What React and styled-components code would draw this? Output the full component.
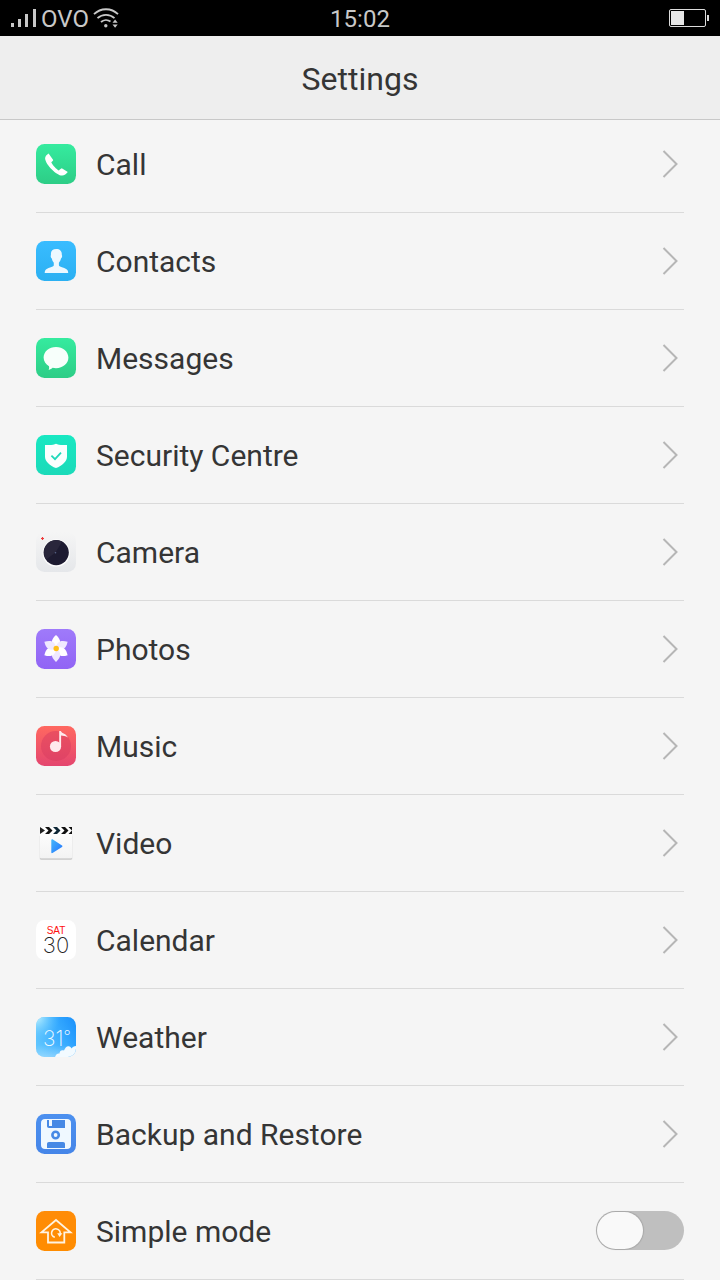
import React from 'react';
import styled, { createGlobalStyle } from 'styled-components';

const GlobalStyle = createGlobalStyle`
  * {
    box-sizing: border-box;
  }

  body {
    margin: 0;
    background: #f5f5f5;
    color: #353535;
    font-family: Roboto, "Noto Sans", sans-serif;
  }
`;

const StatusBar = styled.div`
  display: grid;
  grid-template-columns: 1fr auto 1fr;
  align-items: center;
  height: 36px;
  padding: 0 11px;
  background: #000;
  color: #c8c8c8;
`;

const StatusGroup = styled.div`
  display: flex;
  align-items: center;
  justify-content: ${props => (props.$end ? 'flex-end' : 'flex-start')};
  gap: 4px;
`;

const StatusText = styled.span`
  padding-top: 2px;
  font-size: 24px;
  line-height: 28px;
`;

const Header = styled.header`
  position: relative;
  z-index: 1;
  display: flex;
  align-items: center;
  justify-content: center;
  height: 84px;
  padding-top: 2px;
  background: #eee;
  border-bottom: 1px solid #c8c8c8;
`;

const Title = styled.h1`
  margin: 0;
  font-size: 32px;
  font-weight: 400;
  line-height: 40px;
`;

/* the first row is scrolled a little way under the header */
const List = styled.ul`
  margin: -4px 36px 0;
  padding: 0;
  list-style: none;
`;

const Item = styled.li`
  border-bottom: 1px solid #dadada;
`;

const RowLink = styled.a`
  display: flex;
  align-items: center;
  gap: 20px;
  height: 96px;
  padding-right: 6px;
  color: inherit;
  text-decoration: none;
`;

const RowLabel = styled.label`
  display: flex;
  align-items: center;
  gap: 20px;
  height: 96px;
`;

const Name = styled.span`
  flex: 1;
  padding-top: 2px;
  font-size: 30px;
  line-height: 40px;
`;

const AppIcon = styled.svg`
  flex: none;
  width: 40px;
  height: 40px;
`;

const Drawing = styled.svg`
  flex: none;
  display: block;
`;

const Switch = styled.input`
  appearance: none;
  flex: none;
  display: flex;
  width: 88px;
  height: 39px;
  margin: 0 0 1px;
  padding: 1px;
  border-radius: 20px;
  background: #bfbfbf;

  &::before {
    content: "";
    width: 46px;
    border-radius: 19px;
    background: #f9f9f9;
    box-shadow: 0 0 1px 1px rgba(0, 0, 0, 0.12);
  }

  &:checked {
    justify-content: flex-end;
    background: #2ad181;
  }
`;

const Signal = () => (
  <Drawing width="26" height="20" viewBox="0 0 26 20" fill="#c8c8c8">
    <rect x="0" y="15" width="3" height="4" />
    <rect x="7" y="11" width="3" height="8" />
    <rect x="14" y="6" width="3" height="13" />
    <rect x="22" y="1" width="3" height="18" />
  </Drawing>
);

const Wifi = () => (
  <Drawing width="26" height="20" viewBox="0 0 26 20" fill="none" stroke="#c8c8c8" strokeWidth="1.8">
    <path d="M1 6.2a17 17 0 0 1 24 0M4.5 10.2a12.5 12.5 0 0 1 17 0M8 14a7.5 7.5 0 0 1 9.5-.5" />
    <circle cx="12.8" cy="17.8" r="1.7" fill="#c8c8c8" stroke="none" />
    <path d="m19.5 14.8 2.6-3.2 2.6 3.2zM19.5 16.6l2.6 3.2 2.6-3.2z" fill="#c8c8c8" stroke="none" />
  </Drawing>
);

const Battery = () => (
  <Drawing width="40" height="18" viewBox="0 0 40 18">
    <rect x=".5" y=".5" width="36" height="17" rx="1.5" fill="none" stroke="#dcdcdc" />
    <rect x="2" y="2" width="13" height="14" fill="#e6e6e6" />
    <rect x="38" y="6" width="2" height="6" fill="#dcdcdc" />
  </Drawing>
);

const Chevron = () => (
  <Drawing width="16" height="28" viewBox="0 0 16 28" fill="none" stroke="#b6b6b6" strokeWidth="2">
    <path d="m1.5 1 13 13-13 13" />
  </Drawing>
);

const Tile = ({ id, from, to, children }) => (
  <AppIcon viewBox="0 0 40 40" aria-hidden="true">
    <defs>
      <linearGradient id={id} x1="0" y1="0" x2="0" y2="1">
        <stop offset="0" stopColor={from} />
        <stop offset="1" stopColor={to} />
      </linearGradient>
    </defs>
    <rect width="40" height="40" rx="8.5" fill={`url(#${id})`} />
    {children}
  </AppIcon>
);

const CallIcon = () => (
  <Tile id="call" from="#35eb9f" to="#2dcd86">
    <path
      d="M12.6 9.5c-1.7 1-3.6 2.7-3.5 5 .3 3.2 3.2 7.5 6.8 11 3.4 3.5 7.3 6.1 10.2 6.1 2.2 0 4.3-1.8 5.7-3.6L25.8 24.3c-1.3.4-2 1.4-2.9 2.1-2.5-1.3-6.1-5.2-7.6-8 .7-.9 1.6-1.3 1.9-2.3z"
      fill="#fff"
    />
  </Tile>
);

const ContactsIcon = () => (
  <Tile id="contacts" from="#39bcff" to="#2bb0f2">
    <path
      d="M20.3 8c3.8 0 5.8 2.3 5.5 6 .7.7.2 3-.8 3.6-.4 2-1.2 3.1-2.1 4.2v2.5c0 2 7.3 2.2 8.8 5.2.4.8.5 1.9.5 2.5H8.7c0-.6.1-1.7.5-2.5 1.5-3 8.6-3.2 8.6-5.2v-2.5c-.9-1.1-1.6-2.2-2-4.2-1-.6-1.5-2.9-.8-3.6-.6-3.8 1.3-6 5.3-6z"
      fill="#edf8ff"
    />
  </Tile>
);

const MessagesIcon = () => (
  <Tile id="messages" from="#35eb9f" to="#2dcd86">
    <path
      d="M20 9c6.9 0 12.4 4.6 12.4 10.6S26.9 30.2 20 30.2c-1.3 0-2.3-.1-3.4-.4-1 .9-2.3 1.8-4 2.2.5-1.1.7-2.5.4-3.8-3.3-1.9-5.4-5-5.4-8.6C7.6 13.6 13.1 9 20 9z"
      fill="#f7fffb"
    />
  </Tile>
);

const SecurityIcon = () => (
  <Tile id="security" from="#18e8c2" to="#1bdab9">
    <path
      d="M20 8.7c1.9 1.3 5.9 1.5 11 1.2v11.8c0 4.8-5 9.1-11 11.3C14 30.8 9 26.5 9 21.7V9.9c5.1.3 9.1.1 11-1.2z"
      fill="#fafffe"
    />
    <path d="m15.4 20.6 3.6 3.5 6-6.4" fill="none" stroke="#1fd9ba" strokeWidth="1.8" />
  </Tile>
);

const CameraIcon = () => (
  <Tile id="camera" from="#f5f5f5" to="#e5e7ea">
    <circle cx="20.2" cy="21" r="13.7" fill="#fcfcfc" />
    <circle cx="20.2" cy="20.6" r="12.6" fill="#1d1b31" />
    <path d="M26.2 9.5a12.6 12.6 0 0 0-12 0 12.6 12.6 0 0 0-4 18L19.5 20.5z" fill="#29263b" />
    <circle cx="19.5" cy="20.7" r=".8" fill="#59658a" />
    <path d="M6.5 5v3M5 6.5h3" stroke="#ee3a3a" strokeWidth="1.2" />
  </Tile>
);

const petals = [0, 60, 120, 180, 240, 300];

const PhotosIcon = () => (
  <Tile id="photos" from="#9f7afa" to="#9164f5">
    {petals.map(angle => (
      <path
        key={angle}
        d="M20 19.5c-5.6-3.5-5.6-8.5 0-13.4 5.6 4.9 5.6 9.9 0 13.4z"
        fill={angle % 120 ? '#f0e9ff' : '#fffdff'}
        transform={`rotate(${angle} 20 19.5)`}
      />
    ))}
    <circle cx="20.2" cy="19.5" r="2.7" fill="#ffbf18" />
  </Tile>
);

const MusicIcon = () => (
  <Tile id="music" from="#ff6860" to="#e4466f">
    <circle cx="20" cy="20" r="15" fill="#d83c60" opacity=".5" />
    <circle cx="19.5" cy="20.5" r="5.6" fill="#ffeaec" />
    <path d="M23.2 5h1.6c1.1 2.4 4.5 1.9 7.2 6.4-2.5-1.2-5-1.7-6.9-1.8v11h-1.9z" fill="#ffeaec" />
  </Tile>
);

const VideoIcon = () => (
  <AppIcon viewBox="0 0 40 40" aria-hidden="true">
    <defs>
      <linearGradient id="board" x1="0" y1="0" x2="0" y2="1">
        <stop offset="0" stopColor="#fff" />
        <stop offset="1" stopColor="#f3f3f3" />
      </linearGradient>
      <linearGradient id="play" x1="0" y1="0" x2="1" y2="1">
        <stop offset="0" stopColor="#45b8fa" />
        <stop offset="1" stopColor="#2372ff" />
      </linearGradient>
    </defs>
    <rect x="3.5" y="12" width="33" height="25" rx="1.5" fill="#e6e6e6" />
    <rect x="4" y="20" width="32" height="16.5" rx="1.5" fill="#bdbdbd" />
    <rect x="4" y="4" width="32" height="31.5" rx="1" fill="url(#board)" />
    <path d="M4 4l5 3.5L4 11z" fill="#222" />
    <path d="M9 4h4l3.5 3.5L13 11H9l3.5-3.5zM25 4h4l3.5 3.5L29 11h-4l3.5-3.5zM32.5 4H36v3.5zM32.500 11 36 7.5V11z" fill="#111" />
    <path d="M17 4h4l3.5 3.5L21 11h-4l3.5-3.5z" fill="#0d2635" />
    <path d="M15.3 17c0-.7.6-1 1.2-.7l9.5 6.2c.6.4.6 1 0 1.4l-9.5 6.2c-.6.4-1.2 0-1.2-.6z" fill="url(#play)" />
  </AppIcon>
);

const CalendarIcon = () => (
  <Tile id="calendar" from="#fff" to="#fff">
    <text x="20" y="14" textAnchor="middle" fontFamily="Liberation Sans, sans-serif" fontSize="10" fill="#ff1010">
      SAT
    </text>
    <text x="20" y="33" textAnchor="middle" fontFamily="Inter, sans-serif" fontWeight="200" fontSize="22" fill="#222">
      30
    </text>
  </Tile>
);

const WeatherIcon = () => (
  <AppIcon viewBox="0 0 40 40" aria-hidden="true">
    <defs>
      <linearGradient id="sky" x1="0" y1=".6" x2="1" y2=".1">
        <stop offset="0" stopColor="#5fc5ff" />
        <stop offset=".6" stopColor="#35a9ff" />
        <stop offset="1" stopColor="#1c92fb" />
      </linearGradient>
      <radialGradient id="sun" cx="0" cy="0" r=".6">
        <stop offset="0" stopColor="#c5f5ff" />
        <stop offset="1" stopColor="#5fc8ff" stopOpacity="0" />
      </radialGradient>
      <linearGradient id="haze" x1="0" y1="0" x2="0" y2="1">
        <stop offset="0" stopColor="#bfe6ff" stopOpacity="0" />
        <stop offset="1" stopColor="#bfe6ff" stopOpacity=".5" />
      </linearGradient>
      <clipPath id="sky-clip">
        <rect width="40" height="40" rx="8.5" />
      </clipPath>
    </defs>
    <g clipPath="url(#sky-clip)">
      <rect width="40" height="40" fill="url(#sky)" />
      <rect width="40" height="40" fill="url(#sun)" />
      <rect y="28" width="40" height="12" fill="url(#haze)" />
      <path d="M19 40c1-3 3-4 4.5-3.5 0-3 2.5-4 4.5-3 1-2.5 3-5 5.5-4 1.5.5 1.5 1.5 2 2 1-1.5 2.5-2.5 4.5-2.5V40z" fill="#f2faff" />
      <text x="7" y="29" fontFamily="Inter, sans-serif" fontWeight="200" fontSize="21" fill="#f0faff">
        31<tspan fontSize="16" dy="-4">°</tspan>
      </text>
    </g>
  </AppIcon>
);

const BackupIcon = () => (
  <Tile id="backup" from="#4c90ef" to="#4585e8">
    <path d="M9 5h22c2.5 0 4 1.5 4 4v22c0 2.5-1.5 4-4 4H9c-2.5 0-4-1.5-4-4V9c0-2.5 1.5-4 4-4z" fill="#eff8ff" />
    <path d="M11 6h18v8H13c-1.3 0-2-.7-2-2z" fill="#4689e5" />
    <rect x="13" y="6" width="3" height="6" fill="#eff8ff" />
    <path d="M13 28h14c1.3 0 2 .7 2 2v4H11v-4c0-1.3.7-2 2-2z" fill="#4689e5" />
    <circle cx="19.6" cy="21" r="3.2" fill="none" stroke="#4689e5" strokeWidth="2.6" />
  </Tile>
);

const SimpleIcon = () => (
  <Tile id="simple" from="#ff8c08" to="#ff8c00">
    <path d="M20 9 34.5 21.3H28.3v10.2H12V21.3H5.5z" fill="none" stroke="#fff3e2" strokeWidth="1.8" />
    <path d="M18.8 26.3a4.3 4.3 0 1 1 5.3-3.3" fill="none" stroke="#fff3e2" strokeWidth="1.6" />
    <path d="M21.2 22.2h5.2l-2.8 3.7z" fill="#fff3e2" />
  </Tile>
);

const apps = [
  { name: 'Call', Icon: CallIcon },
  { name: 'Contacts', Icon: ContactsIcon },
  { name: 'Messages', Icon: MessagesIcon },
  { name: 'Security Centre', Icon: SecurityIcon },
  { name: 'Camera', Icon: CameraIcon },
  { name: 'Photos', Icon: PhotosIcon },
  { name: 'Music', Icon: MusicIcon },
  { name: 'Video', Icon: VideoIcon },
  { name: 'Calendar', Icon: CalendarIcon },
  { name: 'Weather', Icon: WeatherIcon },
  { name: 'Backup and Restore', Icon: BackupIcon },
];

export default function App() {
  return (
    <>
      <GlobalStyle />
      <StatusBar>
        <StatusGroup>
          <Signal />
          <StatusText>OVO</StatusText>
          <Wifi />
        </StatusGroup>
        <StatusText>15:02</StatusText>
        <StatusGroup $end>
          <Battery />
        </StatusGroup>
      </StatusBar>
      <Header>
        <Title>Settings</Title>
      </Header>
      <main>
        <List>
          {apps.map(({ name, Icon }) => (
            <Item key={name}>
              <RowLink href="#">
                <Icon />
                <Name>{name}</Name>
                <Chevron />
              </RowLink>
            </Item>
          ))}
          <Item>
            <RowLabel htmlFor="simple-mode">
              <SimpleIcon />
              <Name>Simple mode</Name>
              <Switch type="checkbox" role="switch" id="simple-mode" />
            </RowLabel>
          </Item>
        </List>
      </main>
    </>
  );
}
